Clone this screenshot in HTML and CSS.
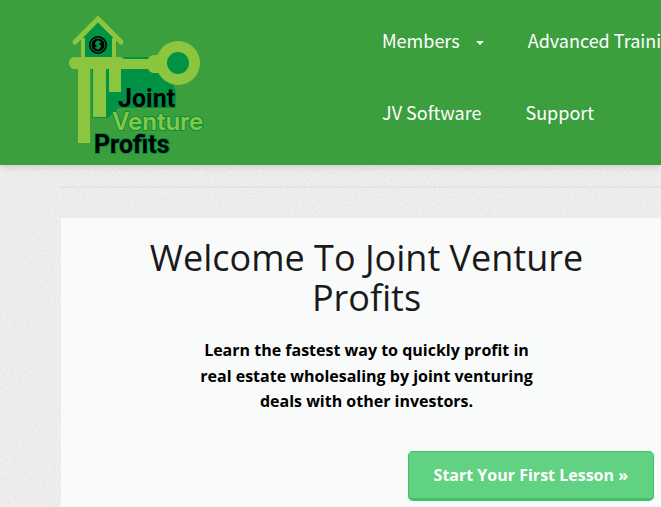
FILE: index.html
```
<!DOCTYPE html>
<html lang="en">
<head>
<meta charset="utf-8">
<title>Joint Venture Profits</title>
<link rel="stylesheet" href="styles.css">
</head>
<body>
<svg class="texture" aria-hidden="true">
  <filter id="grain" x="0" y="0" width="100%" height="100%" color-interpolation-filters="sRGB">
    <feTurbulence type="fractalNoise" baseFrequency="0.5" numOctaves="3" seed="4"/>
    <feColorMatrix values="0.07 0 0 0 0.892  0.07 0 0 0 0.892  0.07 0 0 0 0.892  0 0 0 0 1"/>
  </filter>
  <rect width="100%" height="100%" filter="url(#grain)"/>
</svg>
<header class="site-header">
  <a class="logo" href="#">
    <svg width="144" height="149" viewBox="64 12 144 149" role="img" aria-label="Joint Venture Profits">
      <g class="logo-shade">
        <path d="M83 38 98 21 114 38V57H160V70L174 86Q178 96 174 108H118L108 118H92V70H83Z"/>
      </g>
      <g class="logo-key">
        <path d="M74 57H121Q123 59 126 59H148Q150 55 154 55H165V73H154Q150 73 148 69H74A5 6 0 0 1 74 57Z"/>
        <path d="M78 68H90V143H78ZM93 68V117H106V69H104V68ZM109 68H121V92H109Z"/>
        <circle cx="178" cy="63" r="22"/>
        <path d="M81 38H85V58H81ZM112 38H116V58H112Z"/>
      </g>
      <circle class="logo-shade" cx="178" cy="63" r="11"/>
      <path class="logo-roof" d="M75 42 98 19 121 42"/>
      <circle class="logo-coin" cx="98" cy="45" r="9"/>
      <circle class="logo-coin-ring" cx="98" cy="45" r="7"/>
      <path class="logo-dollar" d="M100.500 43Q98 40.500 96.500 42.500T98 45T99.500 47.500T95.500 47M98 40.500V49.500"/>
      <g class="logo-text">
        <text x="118" y="107">Joint</text>
        <text class="logo-light" x="112" y="130">Venture</text>
        <text x="94" y="153">Profits</text>
      </g>
    </svg>
  </a>
  <nav class="menu" aria-label="Main">
    <a class="has-children" href="#">Members</a>
    <a href="#">Advanced Training</a>
    <a href="#">JV Software</a>
    <a href="#">Support</a>
  </nav>
</header>
<main class="page">
  <hr class="rule">
  <section class="panel">
    <h1>Welcome To Joint Venture Profits</h1>
    <p class="intro">Learn the fastest way to quickly profit in real estate wholesaling by joint venturing deals with other investors.</p>
    <a class="cta" href="#">Start Your First Lesson »</a>
  </section>
</main>
</body>
</html>
```

FILE: styles.css
```
* {
  box-sizing: border-box;
}

body {
  margin: 0;
  min-height: 100vh;
  display: flex;
  flex-direction: column;
  overflow: hidden;
  background: #ececec;
  color: #000;
  font-family: "Open Sans", sans-serif;
}

.texture {
  position: absolute;
  inset: 0;
  z-index: -1;
  width: 100%;
  height: 100%;
}

.site-header {
  display: flex;
  align-items: flex-start;
  gap: 174px;
  padding: 12px 0 4px 64px;
  background: #3c9f3e;
  box-shadow: 0 1px 8px rgba(0, 0, 0, 0.16);
}

.logo,
.logo svg {
  display: block;
  flex: none;
}

.logo-shade {
  fill: #009245;
}

.logo-key {
  fill: #8cc63f;
}

.logo-roof {
  fill: none;
  stroke: #8cc63f;
  stroke-width: 5;
  stroke-linecap: round;
}

.logo-coin {
  fill: #000;
}

.logo-coin-ring,
.logo-dollar {
  fill: none;
  stroke: #009245;
}

.logo-coin-ring {
  stroke-width: 1;
}

.logo-dollar {
  stroke-width: 2;
}

.logo-text {
  font: 700 25px Roboto, sans-serif;
  paint-order: stroke;
  stroke: #009245;
  stroke-width: 2;
  stroke-linejoin: round;
}

.logo-light {
  fill: #8cc63f;
  font: 600 24px Inter, sans-serif;
}

.menu {
  display: flex;
  flex: 0 0 360px;
  flex-wrap: wrap;
  column-gap: 44px;
  font-family: "Noto Sans CJK SC", sans-serif;
  font-size: 18px;
  line-height: 72px;
  margin-top: -8px;
}

.menu a {
  color: #fff;
  text-decoration: none;
  white-space: nowrap;
}

.has-children {
  display: flex;
  align-items: center;
  gap: 16px;
}

.has-children::after {
  content: "";
  margin-top: 6px;
  border: 4px solid transparent;
  border-top-color: #fff;
  border-bottom: 0;
}

.page {
  flex: 1;
  display: flex;
  flex-direction: column;
  padding: 21px 0 0 61px;
}

.rule {
  width: 100%;
  height: 2px;
  margin: 0 0 30px;
  border: 0;
  background: #e4e4e4;
}

.panel {
  flex: 1;
  display: flex;
  flex-direction: column;
  padding: 20px 7px 6px 18px;
  background: #f9fbfa;
}

h1 {
  margin: 0;
  padding: 0 60px;
  color: #1a1a1a;
  font-size: 36px;
  font-weight: 400;
  line-height: 40px;
  text-align: center;
}

.intro {
  max-width: 350px;
  margin: 20px auto 36px;
  font-size: 16px;
  font-weight: 700;
  line-height: 1.6;
  text-align: center;
}

.cta {
  align-self: flex-end;
  padding: 11px 25px;
  border: 1px solid #3ec267;
  border-bottom-width: 3px;
  border-radius: 5px;
  background: #61d182;
  color: #fff;
  font-size: 16px;
  font-weight: 700;
  line-height: 24px;
  text-decoration: none;
}
```
